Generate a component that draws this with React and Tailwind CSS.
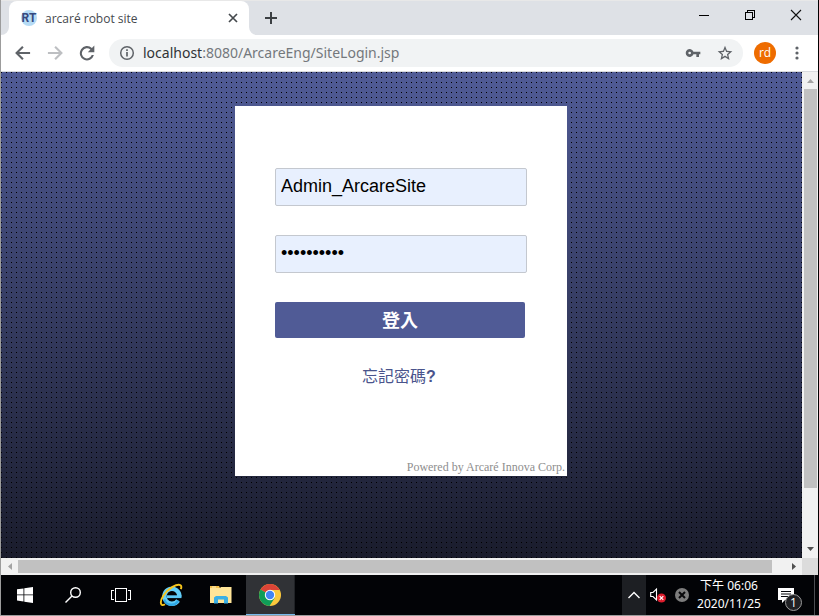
import React, { useState } from "react";

const UI = "font-['Open_Sans','Noto_Sans_CJK_TC',sans-serif]";

function TabFoot({ flip }) {
  return (
    <svg viewBox="0 0 8 8" className={flip ? "size-2 -scale-x-100" : "size-2"} aria-hidden="true">
      <path d="M8 0v8H0a8 8 0 0 0 8-8z" fill="#fff" />
    </svg>
  );
}

function TabStrip() {
  return (
    <header className="flex h-[35px] shrink-0 items-end border-t border-[#e8e8e8] bg-[#dee1e6]">
      <TabFoot />
      <div className="flex h-[34px] w-60 items-center rounded-t-lg bg-white pl-3 pr-2">
        <span className="flex size-4 items-center justify-center rounded-full bg-[#b5dbf5] font-['Roboto',sans-serif] text-xs font-bold leading-none text-[#35497f]">
          RT
        </span>
        <span className="ml-2 flex-1 whitespace-nowrap pt-px text-xs text-[#45494d]">arcaré robot site</span>
        <button type="button" aria-label="Close tab" className="flex size-4 items-center justify-center">
          <svg viewBox="0 0 16 16" className="size-4" stroke="#45494d" strokeWidth="1.7" fill="none">
            <path d="M4 4l8 8M12 4l-8 8" />
          </svg>
        </button>
      </div>
      <TabFoot flip />
      <button type="button" aria-label="New tab" className="mb-2 ml-1.5 size-4">
        <svg viewBox="0 0 16 16" className="size-4" stroke="#3c4043" strokeWidth="2" fill="none">
          <path d="M2 7h12M8 1v12" />
        </svg>
      </button>
      <div className="mb-3 ml-auto mr-3.5 flex items-center gap-[30px]">
        <button type="button" aria-label="Minimize" className="size-4">
          <svg viewBox="0 0 16 16" className="size-4" fill="none" stroke="#000" shapeRendering="crispEdges">
            <path d="M3 8.500h10" />
          </svg>
        </button>
        <button type="button" aria-label="Restore" className="size-4">
          <svg viewBox="0 0 16 16" className="size-4" fill="none" stroke="#000" shapeRendering="crispEdges">
            <path d="M3.500 5.500h7v7h-7zM5.500 5.500v-2h7v7h-2" />
          </svg>
        </button>
        <button type="button" aria-label="Close" className="size-4">
          <svg viewBox="0 0 16 16" className="size-4" fill="none" stroke="#111" strokeWidth="1.1">
            <path d="M3 3l10 10M13 3L3 13" />
          </svg>
        </button>
      </div>
    </header>
  );
}

function Toolbar() {
  return (
    <nav className="flex h-[37px] shrink-0 items-center border-b border-[#d9dbdf] bg-white px-3">
      <button type="button" aria-label="Back" className="mr-3 size-5">
        <svg viewBox="0 0 24 24" className="size-5" fill="#5f6368">
          <path d="M20.500 10.800H7.300l5.500-5.500L11 3.500 2.500 12l8.500 8.500 1.800-1.800-5.500-5.500h13.200z" />
        </svg>
      </button>
      <button type="button" aria-label="Forward" className="mr-3 size-5">
        <svg viewBox="0 0 24 24" className="size-5" fill="#bdbfc2">
          <path d="M3.500 10.800h13.200l-5.500-5.500L13 3.500l8.500 8.500-8.500 8.500-1.800-1.800 5.500-5.500H3.500z" />
        </svg>
      </button>
      <button type="button" aria-label="Reload" className="mr-3 size-5">
        <svg viewBox="0 0 24 24" className="size-5" fill="#5f6368">
          <path d="M17.900 6A8.600 8.600 0 1 0 20.300 14.500h-2.600a6.100 6.100 0 1 1-1.600-6.600L13 11h7.800V3z" />
        </svg>
      </button>
      <div className="flex h-7 flex-1 items-center rounded-full bg-[#f1f3f4] px-2.5">
        <svg viewBox="0 0 16 16" className="mr-2 size-4 shrink-0" fill="none" stroke="#5f6368" strokeWidth="1.500" aria-hidden="true">
          <circle cx="8" cy="8" r="6.300" />
          <path d="M8 7v4.500M8 4.200v1.700" strokeWidth="1.700" />
        </svg>
        <p className="flex-1 whitespace-nowrap font-['Noto_Sans',sans-serif] text-sm leading-5 text-[#74787c]">
          <span className="text-[#303336]">localhost</span>:8080/ArcareEng/SiteLogin.jsp
        </p>
        <button type="button" aria-label="Saved passwords" className="mr-4 size-4">
          <svg viewBox="0 0 24 24" className="size-4" fill="#5f6368">
            <path d="M12.700 10a6 6 0 1 0 0 4H17v4h4v-4h2v-4zM7 14a2 2 0 1 1 0-4 2 2 0 0 1 0 4z" />
          </svg>
        </button>
        <button type="button" aria-label="Bookmark" className="size-4">
          <svg viewBox="0 0 24 24" className="size-4" fill="#5f6368">
            <path d="M23 9.200l-8-.7L12 1 9 8.500l-8 .7 6 5.300L5.200 22.400 12 18.200l6.800 4.200L17 14.500zm-11 6.700l-3.900 2.400 1-4.500-3.400-3 4.500-.4L12 6.200l1.800 4.200 4.500.4-3.400 3 1 4.500z" />
          </svg>
        </button>
      </div>
      <button type="button" aria-label="Profile" className="mx-3 mr-[13px] flex size-[22px] items-center justify-center rounded-full bg-[#ee6c00] ml-[11px] text-xs leading-none text-white">
        rd
      </button>
      <button type="button" aria-label="Menu" className="mr-px size-4">
        <svg viewBox="0 0 16 16" className="size-4" fill="#5f6368">
          <circle cx="8" cy="3" r="1.600" />
          <circle cx="8" cy="8" r="1.600" />
          <circle cx="8" cy="13" r="1.600" />
        </svg>
      </button>
    </nav>
  );
}

function LoginPage() {
  const [account, setAccount] = useState("Admin_ArcareSite");
  const [password, setPassword] = useState("robot12345");
  const field =
    "h-[38px] w-full rounded-xs border border-[#c4c8cf] bg-[#e8f0fe] px-[5px] pb-0.5 text-lg text-black outline-none";
  return (
    <main className="min-w-0 flex-1 overflow-hidden pr-px pt-[34px] font-['Liberation_Sans','Noto_Sans_CJK_TC',sans-serif] [background:conic-gradient(from_270deg_at_1px_1px,#000_90deg,transparent_0)_0_0/5px_5px,linear-gradient(#505b96,#1a1c2c)]">
      <form
        className="mx-auto flex h-[370px] w-[332px] flex-col bg-white px-10 pt-[62px]"
        onSubmit={(e) => e.preventDefault()}
      >
        <input aria-label="帳號" className={field} value={account} onChange={(e) => setAccount(e.target.value)} />
        <input
          aria-label="密碼"
          type="password"
          className={field + " mt-[29px]"}
          value={password}
          onChange={(e) => setPassword(e.target.value)}
        />
        <button type="submit" className="mt-[29px] h-9 w-[250px] rounded-xs bg-[#505b96] pt-0.5 text-lg font-bold leading-8 text-white">
          登入
        </button>
        <a href="#forgot" className="mt-[27px] w-[248px] text-center text-base leading-6 text-[#4a548c]">
          忘記密碼<b>?</b>
        </a>
        <p className="-mr-10 mt-auto whitespace-nowrap pr-0.5 text-right font-['Liberation_Serif',serif] text-xs leading-[18px] text-[#8e8e8e]">
          Powered by Arcaré Innova Corp.
        </p>
      </form>
    </main>
  );
}

function Arrow({ d, color }) {
  return (
    <svg viewBox="0 0 17 17" className="size-[17px] shrink-0" fill={color} aria-hidden="true">
      <path d={d} />
    </svg>
  );
}

function Taskbar() {
  return (
    <footer className="flex h-10 shrink-0 items-stretch bg-[#020306] text-white">
      <button type="button" aria-label="Start" className="flex w-12 items-center justify-center">
        <svg viewBox="0 0 16 16" className="size-4" fill="#fff">
          <path d="M0 2.300l6.500-.9v6.100H0zM7.300 1.300L16 0v7.500H7.300zM0 8.300h6.500v6.200L0 13.600zM7.300 8.300H16V16l-8.700-1.300z" />
        </svg>
      </button>
      <button type="button" aria-label="Search" className="flex w-12 items-center justify-center">
        <svg viewBox="0 0 16 16" className="size-4" fill="none" stroke="#fff" strokeWidth="1.400">
          <circle cx="10.500" cy="5.500" r="4.800" />
          <path d="M7 9L.5 15.500" />
        </svg>
      </button>
      <button type="button" aria-label="Task view" className="flex w-12 items-center justify-center">
        <svg viewBox="0 0 20 16" className="h-4 w-5" fill="none" stroke="#fff" shapeRendering="crispEdges">
          <path d="M4.500 1.500h11v13h-11zM3 3.500H.5v9H3M17 3.500h2.500v9H17" />
        </svg>
      </button>
      <button type="button" aria-label="Internet Explorer" className="flex w-[51px] items-center justify-center">
        <svg viewBox="0 0 24 24" className="size-6" fill="none">
          <path d="M8 13.700h14.500" stroke="#5cc8f6" strokeWidth="2.800" />
          <path d="M20.400 13.500a7.500 7.500 0 1 0-1.300 4" stroke="#62cdf7" strokeWidth="4.400" />
          <path d="M5.200 16.500a7.500 7.500 0 0 0 13.900 1" stroke="#2fa8e6" strokeWidth="2.400" />
          <path d="M6 21.200C1.500 24.200.3 19 4.300 12.800 9 5.300 18.500.2 21.500 2.200c1.200.9.900 2.600.3 4" stroke="#f6c51d" strokeWidth="1.900" />
        </svg>
      </button>
      <button type="button" aria-label="File Explorer" className="flex w-[50px] items-center justify-center">
        <svg viewBox="0 0 22 20" className="h-5 w-[22px]">
          <path d="M0 3V1h9l1 2h11v14H0z" fill="#f5c04a" />
          <path d="M0 3h10l1-1h10.500v16H0z" fill="#ffe598" />
          <path d="M2 2h4" stroke="#fff3c4" />
          <path d="M4 18.500v-6L6 11h10l2 1.500v6h-4v-4H8v4z" fill="#3bb0e6" />
        </svg>
      </button>
      <button type="button" aria-label="Chrome" className="flex w-12 items-center justify-center border-b border-[#76b9ed] bg-[#303236]">
        <svg viewBox="0 0 24 24" className="size-6">
          <circle cx="12" cy="12" r="11" fill="#fbc93d" />
          <path d="M12 12L2.500 6.500a11 11 0 0 1 19 0H12z" fill="#db4437" />
          <path d="M2.500 6.500A11 11 0 0 0 11.500 23l5.300-8.300L12 12z" fill="#0f9d58" />
          <path d="M12 6.500h9.500" stroke="#db4437" />
          <circle cx="12" cy="12" r="5.200" fill="#fff" />
          <circle cx="12" cy="12" r="4.200" fill="#4285f4" />
        </svg>
      </button>
      <span className="w-px border-b border-[#76b9ed] bg-[#202226]" />
      <button type="button" aria-label="Show hidden icons" className="ml-auto flex w-6 items-center justify-center bg-[#1d1f23]">
        <svg viewBox="0 0 14 14" className="size-3.5" fill="none" stroke="#fff" strokeWidth="1.400">
          <path d="M1.500 10L7 4.500l5.500 5.500" />
        </svg>
      </button>
      <button type="button" aria-label="Volume muted" className="ml-1 flex w-4 items-center">
        <svg viewBox="0 0 16 16" className="size-4" fill="none">
          <path d="M.7 5.500H3L6.500 2v11L3 9.500H.7z" stroke="#fff" strokeWidth="1.100" />
          <circle cx="11.500" cy="11" r="4.500" fill="#dc1c2c" />
          <path d="M9.700 9.200l3.600 3.600M13.300 9.200l-3.600 3.600" stroke="#fff" strokeWidth="1.200" />
        </svg>
      </button>
      <button type="button" aria-label="Status" className="ml-2 flex w-4 items-center">
        <svg viewBox="0 0 16 16" className="size-4" fill="none">
          <circle cx="8" cy="8" r="7" fill="#7d7d7d" />
          <path d="M5 5l6 6M11 5l-6 6" stroke="#08080a" strokeWidth="2" />
        </svg>
      </button>
      <time className="flex w-[78px] flex-col items-center justify-center whitespace-nowrap font-['Noto_Sans','Noto_Sans_CJK_TC',sans-serif] text-xs leading-[18px]">
        <span>下午 06:06</span>
        <span>2020/11/25</span>
      </time>
      <button type="button" aria-label="Notifications" className="relative ml-2.5 mr-3 w-6">
        <svg viewBox="0 0 16 16" className="mb-px size-4" fill="#fff">
          <path d="M0 1h16v12H7l-3 3v-3H0z" />
          <path d="M3 4.500h10M3 7h10M3 9.500h7" stroke="#05060a" />
        </svg>
        <span className="absolute bottom-1 right-0 flex size-[17px] items-center justify-center rounded-full border border-[#9a9a9a] bg-[#202124] text-xs leading-none">
          1
        </span>
      </button>
      <span className="mr-1 w-px bg-[#4c4e52]" />
    </footer>
  );
}

export default function App() {
  return (
    <div className={`flex h-screen flex-col overflow-hidden border-b border-l border-[#9c9c9c] ${UI}`}>
      <div className="flex min-h-0 flex-1 flex-col border-r border-black">
        <TabStrip />
        <Toolbar />
        <div className="flex min-h-0 flex-1">
          <LoginPage />
          <div className="flex w-4 shrink-0 flex-col items-center bg-[#f1f1f1]">
            <Arrow d="M5 11h7L8.500 7z" color="#a3a3a3" />
            <div className="w-[13px] flex-[400] bg-[#c1c1c1]" />
            <div className="flex-[53]" />
            <Arrow d="M5 6h7l-3.500 4z" color="#505050" />
          </div>
        </div>
        <div className="flex h-[17px] shrink-0 items-center bg-[#f1f1f1]">
          <Arrow d="M11 5v7L7 8.500z" color="#a3a3a3" />
          <div className="h-[13px] flex-[755] bg-[#c1c1c1]" />
          <div className="flex-[13]" />
          <Arrow d="M7 5v7l4-3.500z" color="#505050" />
          <div className="h-full w-4 bg-[#dcdcdc]" />
        </div>
      </div>
      <Taskbar />
    </div>
  );
}
